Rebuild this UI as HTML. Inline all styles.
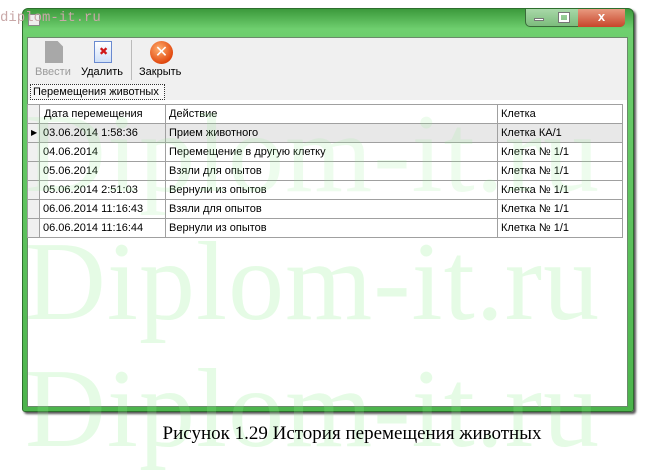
<!DOCTYPE html>
<html><head><meta charset="utf-8"><style>
*{margin:0;padding:0;box-sizing:border-box}
body{width:649px;height:460px;background:#fff;position:relative;overflow:hidden;font-family:"Liberation Sans","DejaVu Sans",sans-serif;font-size:11px;color:#000}
.abs{position:absolute}
.frame{left:22px;top:8px;width:612px;height:404px;border-radius:6px 6px 3px 3px;background:linear-gradient(#3c9a3c,#6fcf6f 20px,#4cb44c);border:1px solid #2d6e2d;box-shadow:2px 2px 2px #555}
.client{left:27px;top:37px;width:601px;height:370px;background:#fff;border:1px solid #6a8a6a}
.tb{left:28px;top:38px;width:599px;height:62px;background:#f0f0f0}
.grid{left:27px;top:104px;width:596px;height:134px;border:1px solid #a0a0a0;border-bottom:none;background:#fff}
.row{position:absolute;left:0;width:594px;height:19px;border-bottom:1px solid #a0a0a0}
.row div{position:absolute;top:0;height:18px;line-height:18px;padding-left:3px;border-right:1px solid #a0a0a0;white-space:nowrap}
.c0{left:0;width:12px;background:#f0f0f0}
.c1{left:12px;width:126px}.c2{left:138px;width:332px}.c3{left:470px;width:124px;border-right:none!important}
.wm{font-family:"Liberation Serif",serif;font-size:112px;color:#8ef08e;opacity:.22;left:25px;white-space:nowrap;letter-spacing:1px}
</style></head><body>
<div class="abs frame"></div>
<div class="abs" style="left:525px;top:9px;width:100px;height:18px;border:1px solid #3a6a3a;border-top:none;border-radius:0 0 5px 5px;background:linear-gradient(#a8d8a8,#7cbc7c)"></div>
<div class="abs" style="left:578px;top:9px;width:47px;height:18px;border-radius:0 0 5px 0;background:linear-gradient(#e89a80,#c8452a);color:#fff;font-weight:bold;font-size:13px;text-align:center;line-height:16px">x</div>
<div class="abs" style="left:534px;top:18px;width:10px;height:3px;background:#fff;border:1px solid #777"></div>
<div class="abs" style="left:559px;top:13px;width:10px;height:9px;border:2px solid #fff;outline:1px solid #777"></div>
<div class="abs client"></div>
<div class="abs tb"></div>
<div class="abs" style="left:28px;top:14px;width:12px;height:12px;background:#eee;border:1px solid #888"></div>
<div class="abs" style="left:0;top:10px;font-family:'Liberation Mono',monospace;font-size:14px;color:#c9a8a8">diplom-it.ru</div>
<div class="abs" style="left:45px;top:41px;width:18px;height:22px;background:#a8a8a8;clip-path:polygon(0 0,70% 0,100% 25%,100% 100%,0 100%)"></div>
<div class="abs" style="left:35px;top:66px;color:#9a9a9a">Ввести</div>
<div class="abs" style="left:94px;top:41px;width:18px;height:22px;background:linear-gradient(#fff,#cfe0f8);border:1px solid #6a8ad0"></div>
<div class="abs" style="left:99px;top:45px;color:#d01818;font-weight:bold;font-size:11px">✖</div>
<div class="abs" style="left:81px;top:66px">Удалить</div>
<div class="abs" style="left:131px;top:40px;width:1px;height:40px;background:#bbb"></div>
<div class="abs" style="left:150px;top:41px;width:23px;height:23px;border-radius:50%;background:radial-gradient(circle at 40% 35%,#ffb070,#e24a10 70%,#b02a00);color:#fff;text-align:center;line-height:23px;font-weight:bold;font-size:16px">✕</div>
<div class="abs" style="left:139px;top:66px">Закрыть</div>
<div class="abs" style="left:30px;top:84px;width:135px;height:16px;border:1px dotted #333;background:#f7f7f7;line-height:14px;padding-left:2px">Перемещения животных</div>
<div class="abs grid">
<div class="row" style="top:0;background:#fff"><div class="c0"></div><div class="c1" style="padding-left:4px">Дата перемещения</div><div class="c2">Действие</div><div class="c3">Клетка</div></div>
<div class="row" style="top:19px;background:#e8e8e8"><div class="c0" style="font-size:8px">▶</div><div class="c1">03.06.2014 1:58:36</div><div class="c2">Прием животного</div><div class="c3">Клетка КА/1</div></div>
<div class="row" style="top:38px"><div class="c0"></div><div class="c1">04.06.2014</div><div class="c2">Перемещение в другую клетку</div><div class="c3">Клетка № 1/1</div></div>
<div class="row" style="top:57px"><div class="c0"></div><div class="c1">05.06.2014</div><div class="c2">Взяли для опытов</div><div class="c3">Клетка № 1/1</div></div>
<div class="row" style="top:76px"><div class="c0"></div><div class="c1">05.06.2014 2:51:03</div><div class="c2">Вернули из опытов</div><div class="c3">Клетка № 1/1</div></div>
<div class="row" style="top:95px"><div class="c0"></div><div class="c1">06.06.2014 11:16:43</div><div class="c2">Взяли для опытов</div><div class="c3">Клетка № 1/1</div></div>
<div class="row" style="top:114px"><div class="c0"></div><div class="c1">06.06.2014 11:16:44</div><div class="c2">Вернули из опытов</div><div class="c3">Клетка № 1/1</div></div>
</div>
<div class="abs wm" style="top:90px;opacity:.15">Diplom-it.ru</div>
<div class="abs wm" style="top:218px">Diplom-it.ru</div>
<div class="abs wm" style="top:345px">Diplom-it.ru</div>
<div class="abs" style="left:0;width:649px;top:423px;text-align:center;padding-left:55px;font-family:'Liberation Serif',serif;font-size:19px">Рисунок 1.29 История перемещения животных</div>
</body></html>
